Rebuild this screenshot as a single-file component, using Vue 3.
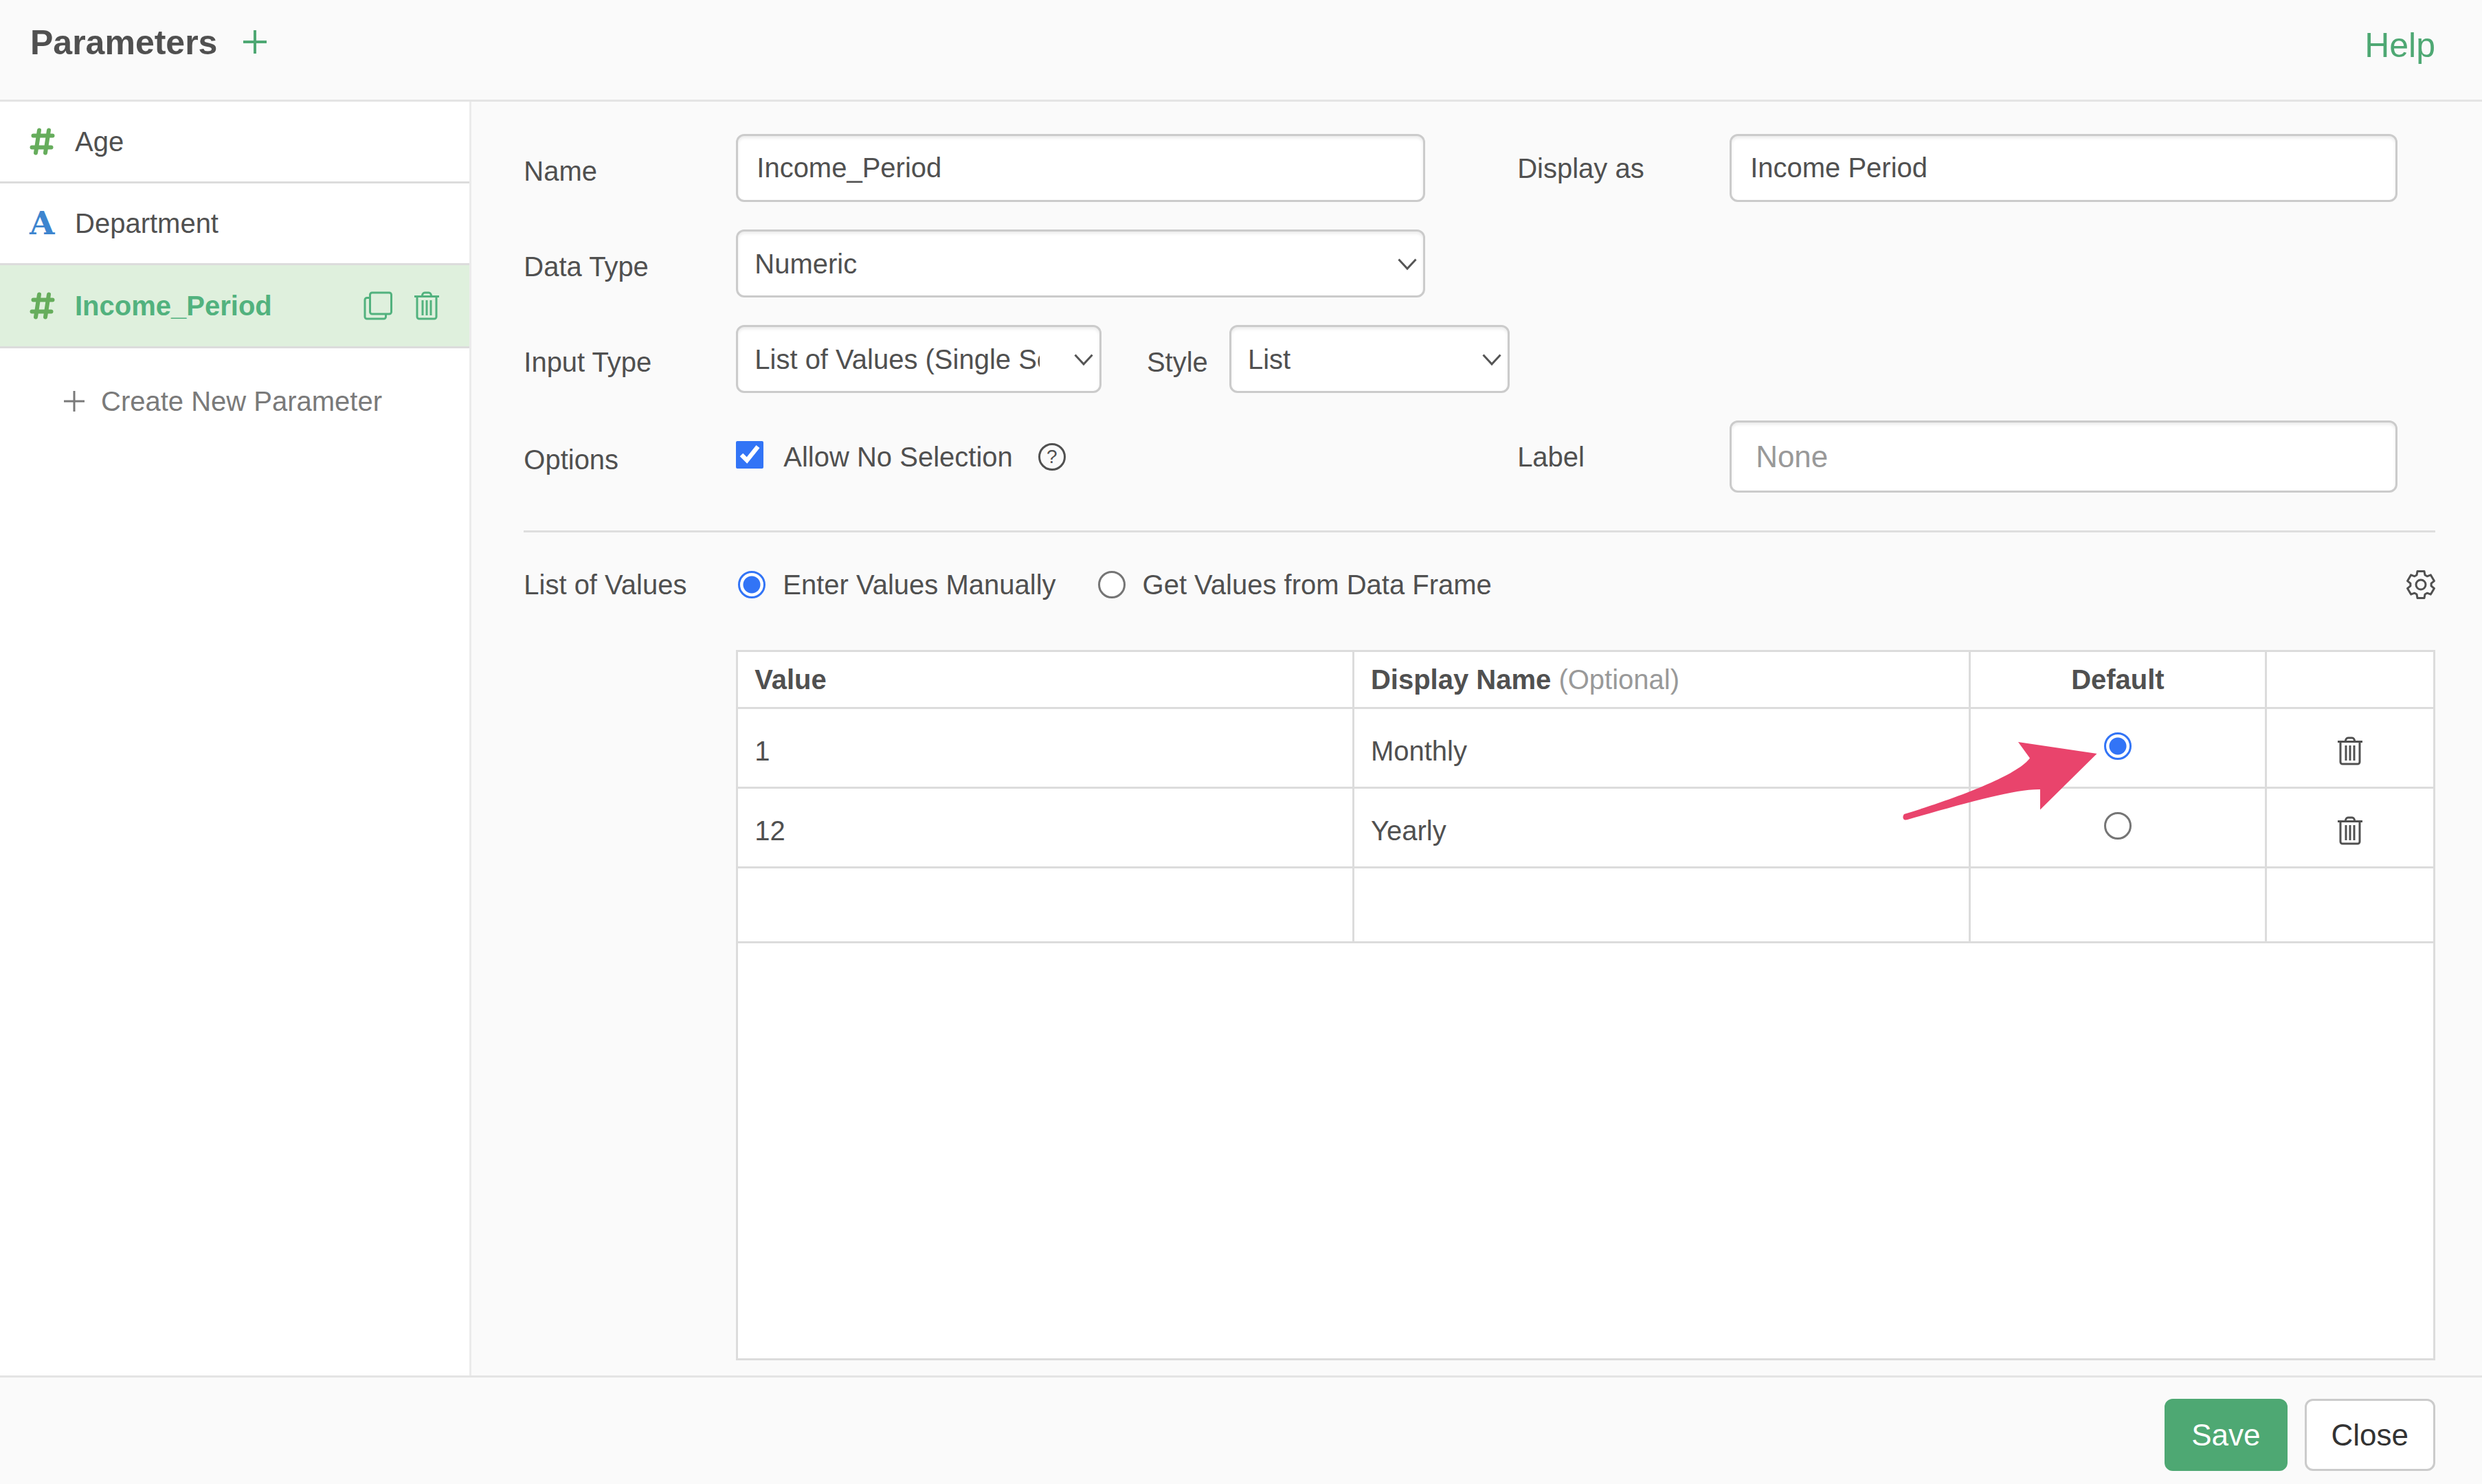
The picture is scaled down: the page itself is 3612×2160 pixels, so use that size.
<script setup>
import { ref } from 'vue'

const parameters = [
  { name: 'Age', type: 'number' },
  { name: 'Department', type: 'text' },
  { name: 'Income_Period', type: 'number' },
]
const selected = ref('Income_Period')

const name = ref('Income_Period')
const displayAs = ref('Income Period')
const dataType = ref('Numeric')
const inputType = ref('List of Values (Single Select)')
const listStyle = ref('List')
const allowNone = ref(true)
const label = ref('')
const source = ref('manual')

const rows = [
  { value: '1', display: 'Monthly' },
  { value: '12', display: 'Yearly' },
]
const defaultValue = ref('1')
</script>

<template>
  <div class="dialog">
    <header class="header">
      <h1 class="title">Parameters</h1>
      <button class="icon-button add" type="button" aria-label="Add parameter">
        <svg width="34" height="34" viewBox="0 0 34 34"><path d="M17 0v34M0 17h34" stroke="currentColor" stroke-width="4" /></svg>
      </button>
      <a class="help" href="#">Help</a>
    </header>

    <div class="body">
      <nav class="sidebar" aria-label="Parameters">
        <ul class="list">
          <li v-for="p in parameters" :key="p.name" class="item" :class="{ active: p.name === selected }">
            <button class="item-name" type="button" @click="selected = p.name">
              <svg v-if="p.type === 'number'" class="hash" width="37" height="40" viewBox="0 0 37 40" aria-hidden="true">
                <path d="M14 3.500 9 36.500M28 3.500 23 36.500M5.500 11.500H33.500M3.500 28.500H31.500" fill="none" stroke="currentColor" stroke-width="6" stroke-linecap="round" />
              </svg>
              <span v-else class="letter" aria-hidden="true">A</span>
              <span>{{ p.name }}</span>
            </button>
            <template v-if="p.name === selected">
              <button class="icon-button" type="button" aria-label="Duplicate">
                <svg width="42" height="42" viewBox="0 0 42 42" fill="none" stroke="currentColor" stroke-width="3">
                  <rect x="9.500" y="2" width="31" height="31" rx="3" />
                  <path d="M9 9.500H5a3 3 0 0 0-3 3V37a3 3 0 0 0 3 3h24.500a3 3 0 0 0 3-3v-4" />
                </svg>
              </button>
              <button class="icon-button" type="button" aria-label="Delete">
                <svg width="36" height="42" viewBox="0 0 36 42" fill="none" stroke="currentColor" stroke-width="3">
                  <path d="M0 7.500h36M4 7.500V37a3 3 0 0 0 3 3h22a3 3 0 0 0 3-3V7.500M11 7.500q1-5.500 4-5.500h6q3 0 4 5.500M12 13v22M18 13v22M24 13v22" />
                </svg>
              </button>
            </template>
          </li>
        </ul>
        <button class="create" type="button">
          <svg width="30" height="30" viewBox="0 0 30 30"><path d="M15 0v30M0 15h30" stroke="currentColor" stroke-width="3" /></svg>
          Create New Parameter
        </button>
      </nav>

      <main class="main">
        <form class="form" @submit.prevent>
          <div class="row">
            <label class="lead" for="name">Name</label>
            <input id="name" v-model="name" class="control" type="text" />
            <label class="second" for="display-as">Display as</label>
            <input id="display-as" v-model="displayAs" class="control" type="text" />
          </div>

          <div class="row">
            <label class="lead" for="data-type">Data Type</label>
            <div class="select">
              <select id="data-type" v-model="dataType" class="control">
                <option>Numeric</option>
              </select>
              <svg class="chevron" width="28" height="18" viewBox="0 0 28 18"><path d="M1.500 1.500 14 15 26.500 1.500" /></svg>
            </div>
          </div>

          <div class="row row-wide">
            <label class="lead" for="input-type">Input Type</label>
            <div class="pair">
              <div class="select">
                <select id="input-type" v-model="inputType" class="control">
                  <option>List of Values (Single Select)</option>
                </select>
                <svg class="chevron" width="28" height="18" viewBox="0 0 28 18"><path d="M1.500 1.500 14 15 26.500 1.500" /></svg>
              </div>
              <label class="style-label" for="style">Style</label>
              <div class="select">
                <select id="style" v-model="listStyle" class="control">
                  <option>List</option>
                </select>
                <svg class="chevron" width="28" height="18" viewBox="0 0 28 18"><path d="M1.500 1.500 14 15 26.500 1.500" /></svg>
              </div>
            </div>
          </div>

          <div class="row">
            <span class="lead">Options</span>
            <div class="option">
              <input id="allow-none" v-model="allowNone" class="checkbox" type="checkbox" />
              <label for="allow-none">Allow No Selection</label>
              <button class="question" type="button" aria-label="About this option">?</button>
            </div>
            <label class="second" for="label">Label</label>
            <input id="label" v-model="label" class="control tall" type="text" placeholder="None" />
          </div>
        </form>

        <section class="values">
          <div class="source">
            <span class="source-title">List of Values</span>
            <label class="choice"><input v-model="source" class="radio" type="radio" name="source" value="manual" />Enter Values Manually</label>
            <label class="choice"><input v-model="source" class="radio" type="radio" name="source" value="frame" />Get Values from Data Frame</label>
            <button class="icon-button gear" type="button" aria-label="Settings">
              <svg width="42" height="42" viewBox="-21 -21 42 42" fill="none" stroke="currentColor" stroke-width="3" stroke-linejoin="round">
                <path d="M-6-14-5-19.500H5L6-14 9.100-12.200 14.400-14.100 19.400-5.400 15.100-1.800V1.800L19.400 5.400 14.400 14.100 9.100 12.200 6 14 5 19.500H-5L-6 14-9.100 12.200-14.400 14.100-19.400 5.400-15.100 1.800V-1.800L-19.400-5.400-14.400-14.100-9.100-12.200Z" />
                <circle r="7" />
              </svg>
            </button>
          </div>

          <div class="grid">
            <table class="table">
              <colgroup>
                <col class="col-text" />
                <col class="col-text" />
                <col class="col-default" />
                <col />
              </colgroup>
              <thead>
                <tr>
                  <th scope="col">Value</th>
                  <th scope="col">Display Name <span class="optional">(Optional)</span></th>
                  <th scope="col" class="center">Default</th>
                  <th></th>
                </tr>
              </thead>
              <tbody>
                <tr v-for="(row, i) in rows" :key="row.value">
                  <td class="text">{{ row.value }}</td>
                  <td class="text">{{ row.display }}</td>
                  <td class="pick">
                    <div class="default">
                      <input v-model="defaultValue" class="radio" type="radio" name="default" :value="row.value" :aria-label="'Default: ' + row.display" />
                      <svg v-if="i === 0" class="pointer" width="283" height="114" viewBox="0 0 283 114" aria-hidden="true">
                        <path d="M282.500 17 168 0 185 23.500C168 47 90 78 2 105Q-1 109 1.500 112.500 3 114 7 113C90 89 165 68 200 69V98.500Z" />
                      </svg>
                    </div>
                  </td>
                  <td class="center trash">
                    <button class="icon-button" type="button" :aria-label="'Delete ' + row.display">
                      <svg width="36" height="42" viewBox="0 0 36 42" fill="none" stroke="currentColor" stroke-width="3">
                        <path d="M0 7.500h36M4 7.500V37a3 3 0 0 0 3 3h22a3 3 0 0 0 3-3V7.500M11 7.500q1-5.500 4-5.500h6q3 0 4 5.500M12 13v22M18 13v22M24 13v22" />
                      </svg>
                    </button>
                  </td>
                </tr>
                <tr class="blank">
                  <td></td>
                  <td></td>
                  <td></td>
                  <td></td>
                </tr>
              </tbody>
            </table>
          </div>
        </section>
      </main>
    </div>

    <footer class="footer">
      <button class="button save" type="button">Save</button>
      <button class="button close" type="button">Close</button>
    </footer>
  </div>
</template>

<style>
body {
  margin: 0;
  background: #fafafa;
}
</style>

<style scoped>
.dialog,
.dialog * {
  box-sizing: border-box;
}
.dialog {
  display: flex;
  flex-direction: column;
  min-height: 100vh;
  color: #505050;
  background: #fafafa;
  font: 40px/48px "Liberation Sans", Arial, sans-serif;
}
button,
input,
select {
  margin: 0;
  color: inherit;
  font: inherit;
}
button {
  padding: 0;
  border: 0;
  background: none;
  cursor: pointer;
}
.icon-button {
  display: inline-flex;
}

.header {
  display: flex;
  align-items: flex-start;
  height: 148px;
  padding: 32px 68px 0 44px;
  border-bottom: 3px solid #e4e4e4;
  font-size: 50px;
  line-height: 60px;
}
.title {
  margin: 0;
  font-size: inherit;
}
.add {
  margin: 12px 0 0 38px;
  color: #4ea873;
}
.help {
  margin-left: auto;
  padding-top: 4px;
  color: #4ea873;
  text-decoration: none;
}

.body {
  display: flex;
  flex: 1;
}
.sidebar {
  flex: 0 0 auto;
  width: 19%;
  border-right: 3px solid #ebebeb;
  background: #fff;
}
.list {
  margin: 0;
  padding: 0;
  list-style: none;
}
.item {
  display: flex;
  align-items: center;
  gap: 32px;
  height: 119px;
  padding: 0 44px 0 43px;
  border-bottom: 3px solid #dcdcdc;
}
.item.active {
  height: 121px;
  color: #52b27e;
  background: #dff0dd;
}
.item-name {
  display: flex;
  flex: 1;
  align-items: center;
  gap: 29px;
  text-align: left;
}
.active .item-name {
  font-weight: bold;
}
.hash {
  color: #66ad5c;
}
.letter {
  width: 37px;
  color: #3d85cf;
  font: bold 47px/48px "DejaVu Serif", serif;
}
.create {
  display: flex;
  align-items: center;
  gap: 24px;
  margin: 53px 0 0 93px;
  color: #7a7a7a;
}

.main {
  display: flex;
  flex: 1;
  flex-direction: column;
  padding: 47px 68px 22px 76px;
}
.form {
  display: grid;
  gap: 40px;
  padding-bottom: 55px;
  border-bottom: 3px solid #dedede;
}
.row {
  display: grid;
  grid-template-columns: 309px minmax(0, 1003fr) 134px 309px minmax(0, 972fr) 55px;
  align-items: center;
}
.row-wide {
  grid-template-columns: 309px minmax(0, 1fr);
}
.lead,
.style-label {
  padding-top: 8px;
}
.second {
  grid-column: 4;
}
.control {
  display: block;
  width: 100%;
  height: 99px;
  padding: 0 27px;
  border: 3px solid #cbcbcb;
  border-radius: 12px;
  background: #fff;
  box-shadow: inset 0 3px 4px rgba(0, 0, 0, 0.08);
}
.tall {
  height: 105px;
  padding: 0 35px;
  font-size: 44px;
}
.control::placeholder {
  color: #999;
  opacity: 1;
}
.select {
  position: relative;
}
.select .control {
  padding: 0 87px 0 24px;
  appearance: none;
}
.chevron {
  position: absolute;
  top: 50%;
  right: 12px;
  margin-top: -8px;
  pointer-events: none;
  fill: none;
  stroke: #555;
  stroke-width: 3;
}
.pair {
  display: grid;
  grid-template-columns: 21.5% 186px 16.5%;
  align-items: center;
}
.style-label {
  padding-left: 66px;
}
.option {
  display: flex;
  align-items: center;
  gap: 29px;
}
.checkbox {
  width: 40px;
  height: 40px;
  margin-bottom: 6px;
  accent-color: #3274f6;
}
.question {
  width: 40px;
  height: 40px;
  margin-left: 8px;
  border: 3px solid #505050;
  border-radius: 50%;
  font-size: 28px;
  line-height: 34px;
}

.values {
  display: flex;
  flex: 1;
  flex-direction: column;
}
.source {
  display: flex;
  align-items: center;
  margin: 52px 0 71px;
}
.source-title {
  width: 312px;
}
.choice {
  display: flex;
  align-items: center;
  gap: 25px;
  margin-right: 61px;
}
.radio {
  display: block;
  width: 40px;
  height: 40px;
  border: 3px solid #757575;
  border-radius: 50%;
  background: #fff;
  appearance: none;
}
.radio:checked {
  border-color: #3274f6;
  background: radial-gradient(circle, #3274f6 12px, #fff 13px);
}
.choice:last-of-type {
  margin-right: 0;
}
.gear {
  margin-left: auto;
}
.grid {
  flex: 1;
  margin-left: 309px;
  border: 3px solid #dcdcdc;
  background: #fff;
}
.table {
  width: 100%;
  border-spacing: 0;
  table-layout: fixed;
}
.col-text {
  width: 36.35%;
}
.col-default {
  width: 17.5%;
}
th,
td {
  height: 116px;
  padding: 0 24px;
  border-bottom: 3px solid #dcdcdc;
  border-right: 3px solid #dcdcdc;
  text-align: left;
}
th:last-child,
td:last-child {
  border-right: 0;
}
th {
  height: 83px;
}
.blank td {
  height: 109px;
}
.text {
  padding-top: 8px;
}
.pick {
  padding-bottom: 5px;
}
.trash {
  padding-top: 2px;
}
.center {
  text-align: center;
}
.trash .icon-button {
  vertical-align: middle;
}
.optional {
  color: #999;
  font-weight: normal;
}
.default {
  position: relative;
  width: 40px;
  margin: 0 auto;
}
.pointer {
  position: absolute;
  top: 14px;
  right: 50px;
  fill: #e9446c;
  pointer-events: none;
}

.footer {
  display: flex;
  justify-content: flex-end;
  gap: 25px;
  padding: 31px 68px 19px;
  border-top: 3px solid #e4e4e4;
}
.button {
  height: 105px;
  padding: 0 36px;
  border: 3px solid #4ea873;
  border-radius: 12px;
  font-size: 44px;
}
.save {
  color: #fff;
  background: #4ea873;
}
.close {
  border-color: #cbcbcb;
  color: #333;
  background: #fff;
}
</style>
